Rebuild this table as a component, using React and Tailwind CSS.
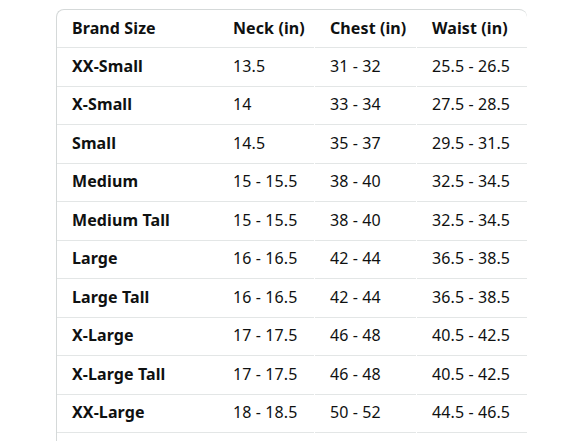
import React from "react";

const rows = [
  ["XX-Small", "13.5", "31 - 32", "25.5 - 26.5"],
  ["X-Small", "14", "33 - 34", "27.5 - 28.5"],
  ["Small", "14.5", "35 - 37", "29.5 - 31.5"],
  ["Medium", "15 - 15.5", "38 - 40", "32.5 - 34.5"],
  ["Medium Tall", "15 - 15.5", "38 - 40", "32.5 - 34.5"],
  ["Large", "16 - 16.5", "42 - 44", "36.5 - 38.5"],
  ["Large Tall", "16 - 16.5", "42 - 44", "36.5 - 38.5"],
  ["X-Large", "17 - 17.5", "46 - 48", "40.5 - 42.5"],
  ["X-Large Tall", "17 - 17.5", "46 - 48", "40.5 - 42.5"],
  ["XX-Large", "18 - 18.5", "50 - 52", "44.5 - 46.5"],
  ["", "", "", ""],
];

const Row = ({ cells, head }) => (
  <div
    className={`grid grid-cols-[161px_97px_102px_110px] ${
      head ? "h-[38px]" : "h-[38.5px]"
    }`}
  >
    {cells.map((c, i) => (
      <div
        key={i}
        className={`flex items-center border-b border-[#e3e6e6] pl-[15px] pb-[2px] tracking-[0.1px] ${
          i === 1 || i === 2 ? "mr-[1px]" : ""
        } ${head || i === 0 ? "font-bold" : ""}`}
      >
        {c}
      </div>
    ))}
  </div>
);

export default function App() {
  return (
    <div className="w-[588px] h-[441px] overflow-hidden bg-white text-[#0f1111] text-[16px] font-['Noto_Sans',sans-serif]">
      <div className="ml-[56px] mt-[9px] w-[471px] border-l border-t border-[#d5d9d9] rounded-t-lg">
        <Row head cells={["Brand Size", "Neck (in)", "Chest (in)", "Waist (in)"]} />
        {rows.map((r, i) => (
          <Row key={i} cells={r} />
        ))}
      </div>
    </div>
  );
}
